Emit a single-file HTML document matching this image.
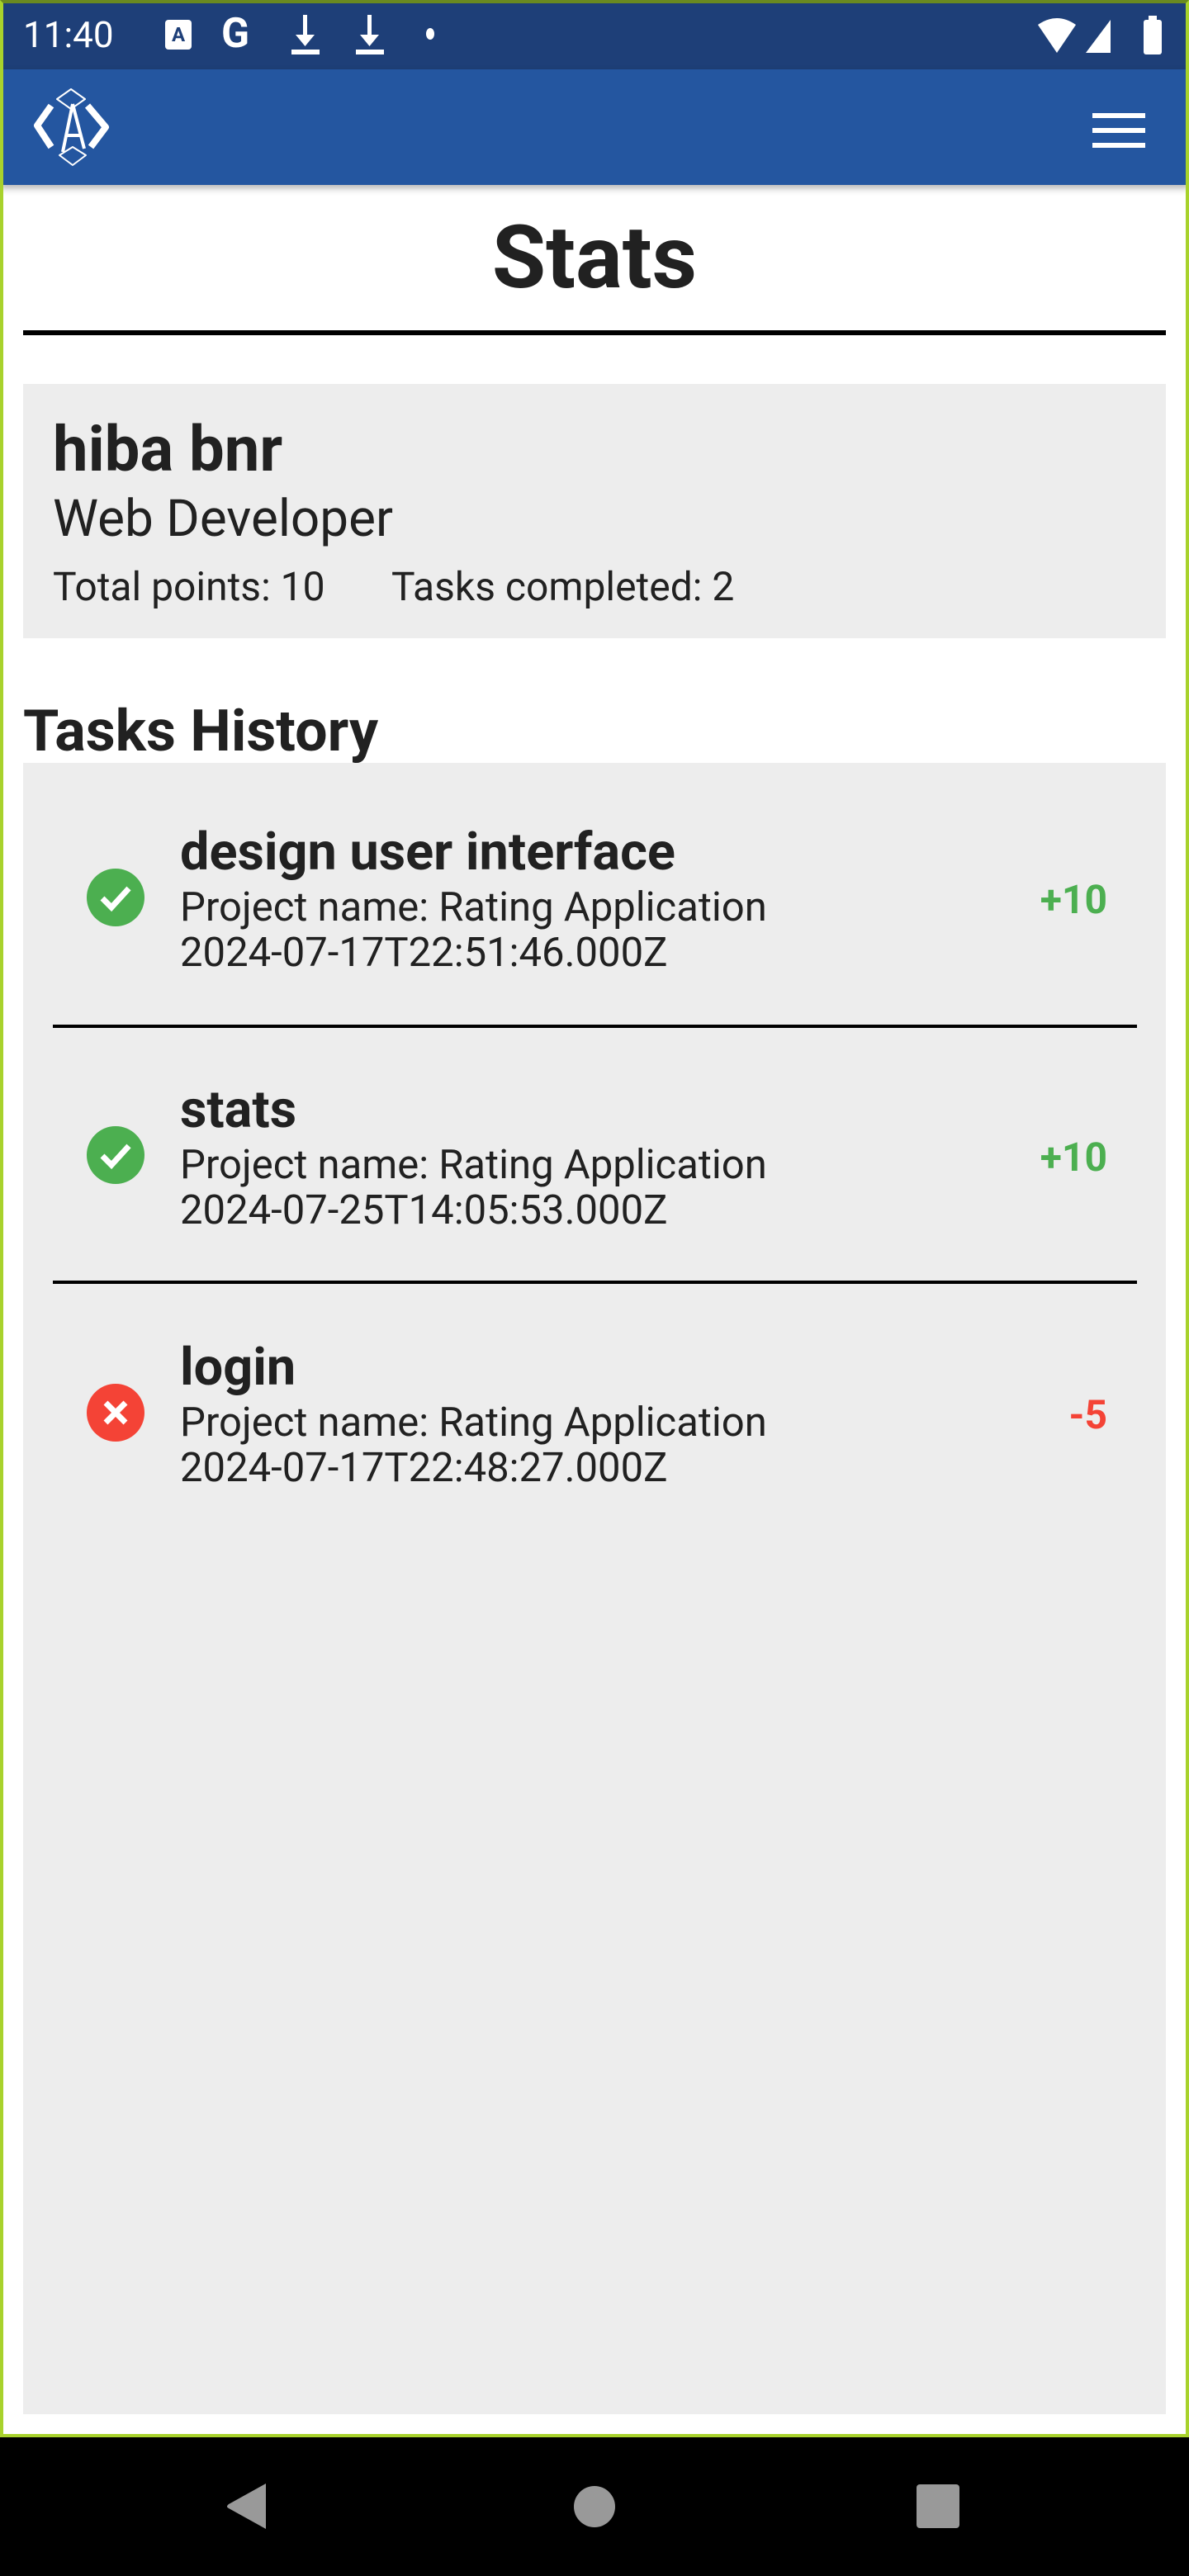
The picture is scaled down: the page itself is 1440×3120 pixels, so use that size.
<!DOCTYPE html>
<html><head><meta charset="utf-8"><style>
*{margin:0;padding:0;box-sizing:border-box}
body{width:1440px;height:3120px;position:relative;background:#fff;font-family:"Roboto","Liberation Sans",sans-serif;color:#212121;overflow:hidden}
.abs{position:absolute;white-space:nowrap}
.frame{position:absolute;left:0;top:0;width:1440px;height:2952px;border:4px solid #a8d22c;border-top:4px solid #6a8a20;pointer-events:none}
</style></head><body>
<div class="abs" style="left:0;top:0;width:1440px;height:84px;background:#1e3f78"></div>
<div class="abs" style="left:28px;top:14px;font-size:44px;color:#fff;line-height:56px">11:40</div>
<div class="abs" style="left:200px;top:24px;width:32px;height:36px;background:#fff;border-radius:4px;color:#1e3f78;font-size:24px;font-weight:bold;text-align:center;line-height:36px">A</div>
<div class="abs" style="left:268px;top:12px;font-size:50px;font-weight:bold;color:#fff;line-height:58px">G</div>
<svg class="abs" style="left:350px;top:18px" width="120" height="50"><g fill="#fff"><rect x="17" y="0" width="5" height="30"/><polygon points="8,24 31,24 19.5,38"/><rect x="3" y="42" width="34" height="6"/><rect x="95" y="0" width="5" height="30"/><polygon points="86,24 109,24 97.5,38"/><rect x="81" y="42" width="34" height="6"/></g></svg>
<div class="abs" style="left:516px;top:34px;width:10px;height:14px;border-radius:50%;background:#fff"></div>
<svg class="abs" style="left:1255px;top:18px" width="170" height="50"><g fill="#fff"><path d="M2 12 Q25 -4 48 12 L25 46 Z"/><polygon points="60,46 90,6 90,46"/><rect x="130" y="6" width="22" height="42" rx="3"/><rect x="136" y="1" width="10" height="6"/></g></svg>
<div class="abs" style="left:0;top:84px;width:1440px;height:140px;background:#2456a0;box-shadow:0 4px 8px rgba(0,0,0,.3)"></div>
<svg class="abs" style="left:40px;top:104px" width="96" height="100" viewBox="0 0 96 100"><g fill="none" stroke="#fff" stroke-linejoin="round"><path d="M46 4 L63 16 L46 28 L29 16 Z" stroke-width="2"/><path d="M48 74 L64 84 L48 96 L32 84 Z" stroke-width="2"/><path d="M22 24 L5 48 L22 74" stroke-width="8"/><path d="M66 24 L88 50 L70 74" stroke-width="8"/><path d="M48 22 L36 80 M48 22 L62 76 M40 60 L58 60" stroke-width="4"/></g></svg>
<div class="abs" style="left:1323px;top:137px;width:64px;height:6px;background:#fff"></div>
<div class="abs" style="left:1323px;top:155px;width:64px;height:6px;background:#fff"></div>
<div class="abs" style="left:1323px;top:173px;width:64px;height:6px;background:#fff"></div>

<div class="abs" style="left:0;width:1440px;top:250px;text-align:center;font-size:106px;font-weight:bold;line-height:124px">Stats</div>
<div class="abs" style="left:28px;top:400px;width:1384px;height:6px;background:#000"></div>

<div class="abs" style="left:28px;top:465px;width:1384px;height:308px;background:#ededed"></div>
<div class="abs" style="left:64px;top:502px;font-size:76px;font-weight:bold;line-height:84px">hiba bnr</div>
<div class="abs" style="left:64px;top:594px;font-size:62px;line-height:70px">Web Developer</div>
<div class="abs" style="left:64px;top:684px;font-size:48px;line-height:54px">Total points: 10</div>
<div class="abs" style="left:474px;top:684px;font-size:48px;line-height:54px">Tasks completed: 2</div>

<div class="abs" style="left:28px;top:846px;font-size:70px;font-weight:bold;line-height:80px">Tasks History</div>
<div class="abs" style="left:28px;top:924px;width:1384px;height:2000px;background:#ededed"></div>

<svg class="abs" style="left:104px;top:1051px" width="72" height="72" viewBox="0 0 72 72"><circle cx="36" cy="36" r="35" fill="#4caf50"/><path d="M20 37 L31 48 L52 25" fill="none" stroke="#fff" stroke-width="7"/></svg>
<div class="abs" style="left:218px;top:998px;font-size:63px;font-weight:bold;line-height:70px">design user interface</div>
<div class="abs" style="left:218px;top:1071px;font-size:49px;line-height:56px">Project name: Rating Application</div>
<div class="abs" style="left:218px;top:1126px;font-size:49px;line-height:56px">2024-07-17T22:51:46.000Z</div>
<div class="abs" style="right:99px;top:1064px;font-size:48px;font-weight:bold;color:#4caf50;line-height:52px">+10</div>
<div class="abs" style="left:64px;top:1241px;width:1313px;height:4px;background:#000"></div>

<svg class="abs" style="left:104px;top:1363px" width="72" height="72" viewBox="0 0 72 72"><circle cx="36" cy="36" r="35" fill="#4caf50"/><path d="M20 37 L31 48 L52 25" fill="none" stroke="#fff" stroke-width="7"/></svg>
<div class="abs" style="left:218px;top:1310px;font-size:63px;font-weight:bold;line-height:70px">stats</div>
<div class="abs" style="left:218px;top:1383px;font-size:49px;line-height:56px">Project name: Rating Application</div>
<div class="abs" style="left:218px;top:1438px;font-size:49px;line-height:56px">2024-07-25T14:05:53.000Z</div>
<div class="abs" style="right:99px;top:1376px;font-size:48px;font-weight:bold;color:#4caf50;line-height:52px">+10</div>
<div class="abs" style="left:64px;top:1551px;width:1313px;height:4px;background:#000"></div>

<svg class="abs" style="left:104px;top:1675px" width="72" height="72" viewBox="0 0 72 72"><circle cx="36" cy="36" r="35" fill="#f44336"/><path d="M24 24 L48 48 M48 24 L24 48" fill="none" stroke="#fff" stroke-width="7"/></svg>
<div class="abs" style="left:218px;top:1622px;font-size:63px;font-weight:bold;line-height:70px">login</div>
<div class="abs" style="left:218px;top:1695px;font-size:49px;line-height:56px">Project name: Rating Application</div>
<div class="abs" style="left:218px;top:1750px;font-size:49px;line-height:56px">2024-07-17T22:48:27.000Z</div>
<div class="abs" style="right:99px;top:1688px;font-size:48px;font-weight:bold;color:#f44336;line-height:52px">-5</div>

<div class="frame"></div>
<div class="abs" style="left:0;top:2952px;width:1440px;height:168px;background:#000"></div>
<svg class="abs" style="left:270px;top:2995px" width="900" height="80"><g fill="#999"><path d="M52 13 L52 68 L7 43 Q3 41 7 38 Z"/><circle cx="450" cy="41" r="25"/><rect x="840" y="14" width="52" height="53" rx="4"/></g></svg>
</body></html>
